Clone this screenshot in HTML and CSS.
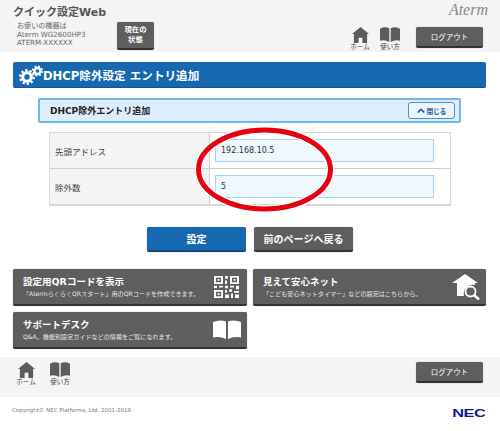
FILE: index.html
```html
<!DOCTYPE html>
<html lang="ja">
<head>
<meta charset="utf-8">
<title>DHCP除外設定 エントリ追加</title>
<link rel="stylesheet" href="styles.css">
</head>
<body>
<svg width="0" height="0" class="defs">
  <defs>
    <symbol id="home" viewBox="0 0 18 18" preserveAspectRatio="none"><path d="M9 0 L18 8 L16 8 L16 18 L11 18 L11 12 L7 12 L7 18 L2 18 L2 8 L0 8 Z"/></symbol>
    <symbol id="book" viewBox="0 0 20 18" preserveAspectRatio="none"><path d="M0 2 Q5 -1 9.3 1.5 L9.3 18 Q5 15 0 16.5 Z M10.7 1.5 Q15 -1 20 2 L20 16.5 Q15 15 10.7 18 Z"/></symbol>
  </defs>
</svg>
<div class="page">
  <header class="head">
    <div class="head-left">
      <div class="app-title">クイック設定Web</div>
      <div class="head-info">
        <div class="device">お使いの機器は<br>Aterm WG2600HP3<br>ATERM-XXXXXX</div>
        <a class="btn btn-status">現在の<br>状態</a>
      </div>
    </div>
    <div class="head-right">
      <div class="aterm">Aterm</div>
      <div class="nav-row">
        <a class="nav-icon"><svg class="ic-home"><use href="#home"/></svg><span>ホーム</span></a>
        <a class="nav-icon"><svg class="ic-book"><use href="#book"/></svg><span>使い方</span></a>
        <a class="btn btn-logout">ログアウト</a>
      </div>
    </div>
  </header>

  <h1 class="page-title">
    <svg class="gears" viewBox="0 0 24 20">
      <g fill="none" stroke="#fff">
        <circle cx="8" cy="12" r="4.3" stroke-width="3.2"/>
        <circle cx="8" cy="12" r="6.8" stroke-width="2.2" stroke-dasharray="2.3 2"/>
        <circle cx="18.5" cy="6" r="3" stroke-width="2.4"/>
        <circle cx="18.5" cy="6" r="4.7" stroke-width="1.8" stroke-dasharray="1.9 1.8"/>
      </g>
    </svg>
    <span>DHCP除外設定 エントリ追加</span>
  </h1>

  <section class="panel-head">
    <span>DHCP除外エントリ追加</span>
    <a class="close"><svg viewBox="0 0 10 6" class="chev"><path d="M1 5.5 L5 1.5 L9 5.5" fill="none" stroke="#15599b" stroke-width="2"/></svg>閉じる</a>
  </section>

  <div class="form-table">
    <div class="row">
      <div class="label">先頭アドレス</div>
      <div class="field"><div class="input">192.168.10.5</div></div>
    </div>
    <div class="row">
      <div class="label">除外数</div>
      <div class="field"><div class="input">5</div></div>
    </div>
  </div>

  <div class="actions">
    <a class="btn btn-blue">設定</a>
    <a class="btn btn-back">前のページへ戻る</a>
  </div>

  <div class="cards">
    <a class="card">
      <div><div class="card-title">設定用QRコードを表示</div><div class="card-sub">「AtermらくらくQRスタート」用のQRコードを作成できます。</div></div>
      <svg class="card-ic qr" viewBox="0 0 25 25" preserveAspectRatio="none">
        <path fill="#fff" d="M0 0h9v9H0z M2 2v5h5V2z M3.5 3.5h2v2h-2z M16 0h9v9h-9z M18 2v5h5V2z M19.5 3.5h2v2h-2z M0 16h9v9H0z M2 18v5h5v-5z M3.5 19.5h2v2h-2z M11 0h3v3h-3z M11 5h2v4h-2z M0 11h3v3H0z M5 11h4v2H5z M11 11h3v3h-3z M16 11h4v2h-4z M22 11h3v4h-3z M11 16h2v3h-2z M15 15h3v3h-3z M20 17h5v2h-5z M11 21h4v4h-4z M17 20h2v5h-2z M21 21h4v4h-4z" fill-rule="evenodd"/>
      </svg>
    </a>
    <a class="card">
      <div><div class="card-title">見えて安心ネット</div><div class="card-sub">「こども安心ネットタイマー」などの設定はこちらから。</div></div>
      <svg class="card-ic netic" viewBox="0 0 28 26">
        <path fill="#fff" d="M13 0 L26 9 L23 9 L23 11 A9 9 0 0 0 12 22 L5 22 L5 9 L0 9 Z"/>
        <circle cx="18.5" cy="17.5" r="5" fill="none" stroke="#fff" stroke-width="1.8"/>
        <path d="M22 21 L27 25.5" stroke="#fff" stroke-width="2.6"/>
      </svg>
    </a>
    <a class="card">
      <div><div class="card-title">サポートデスク</div><div class="card-sub">Q&amp;A、機能別設定ガイドなどの情報をご覧になれます。</div></div>
      <svg class="card-ic bookic"><use href="#book"/></svg>
    </a>
  </div>

  <div class="foot-bar">
    <div class="foot-nav">
      <a class="nav-icon"><svg class="ic-home"><use href="#home"/></svg><span>ホーム</span></a>
      <a class="nav-icon"><svg class="ic-book"><use href="#book"/></svg><span>使い方</span></a>
    </div>
    <a class="btn btn-logout">ログアウト</a>
  </div>

  <footer class="copy">
    <span class="copy-text">Copyright© NEC Platforms, Ltd. 2001-2018</span>
    <span class="nec">NEC</span>
  </footer>

  <svg class="mark" viewBox="0 0 150 96">
    <ellipse cx="71.5" cy="47.5" rx="66" ry="39.5" fill="none" stroke="#fff" stroke-width="7.5"/>
    <ellipse cx="71.5" cy="47.5" rx="66" ry="39.5" fill="none" stroke="#e60012" stroke-width="5"/>
  </svg>
</div>
</body>
</html>
```
FILE: styles.css
```css
* { box-sizing: border-box; }
html, body { margin: 0; padding: 0; background: #fff; }
body { font-family: "DejaVu Sans", "Noto Sans CJK JP", sans-serif; color: #333; overflow: hidden; }
.defs { position: absolute; }
.page { position: relative; width: 500px; height: 431px; overflow: hidden; }

.head { height: 52px; background: #f4f4f4; display: flex; justify-content: space-between; padding: 0 17px 0 13px; }
.app-title { font-size: 11px; font-weight: bold; color: #555; padding-top: 5px; line-height: 16px; }
.head-info { display: flex; align-items: flex-start; padding-left: 4px; margin-top: 1px; }
.device { font-size: 7.1px; line-height: 8.7px; color: #666; width: 100px; }
.btn-status { width: 37px; height: 28px; font-size: 7.4px; line-height: 10px; font-weight: bold; }

.head-right { display: flex; flex-direction: column; align-items: flex-end; }
.aterm { font-family: "Liberation Serif", serif; font-style: italic; font-size: 16px; line-height: 16px; color: #888; padding-top: 2px; margin-right: -5px; height: 27px; }
.nav-row { display: flex; align-items: flex-start; }
.nav-row .nav-icon:nth-child(1) { margin-right: 10px; }
.nav-row .nav-icon:nth-child(2) { margin-right: 16px; }

.nav-icon { display: flex; flex-direction: column; align-items: center; width: 20px; font-size: 6.5px; line-height: 8px; color: #444; }
.nav-icon svg { display: block; fill: #5c5c5c; }
.ic-home { width: 17px; height: 16px; }
.ic-book { width: 20px; height: 15px; margin-bottom: 1px; }
.nav-icon span { white-space: nowrap; }

.btn { display: flex; align-items: center; justify-content: center; text-align: center; color: #fff; background: #5e5e5e; border-radius: 2px; border-bottom: 2px solid #333; box-shadow: 0 0 1px #888; }
.btn-logout { width: 67px; height: 21px; font-size: 7.5px; }

.page-title { margin: 10px 14px 0 13px; height: 26px; background: #1669b0; border-bottom: 1px solid #0f558f; border-radius: 2px; color: #fff; font-size: 11.6px; font-weight: bold; display: flex; align-items: center; padding-left: 6px; gap: 0; }
.gears { width: 24px; height: 20px; flex: none; }

.panel-head { margin: 10px 39px 0 38px; height: 25px; background: #dcedfc; border: 2px solid #6db8f0; border-radius: 2px; display: flex; align-items: center; justify-content: space-between; padding: 0 4px 0 10px; font-size: 9px; font-weight: bold; color: #222; }
.close { width: 47px; height: 17px; border: 1px solid #4d90cc; border-radius: 3px; background: #eef6fd; color: #15599b; font-size: 6.5px; font-weight: bold; display: flex; align-items: center; justify-content: center; gap: 2px; }
.chev { width: 8px; height: 5px; }

.form-table { margin: 9px 49px 0 49px; border: 1px solid #d8d8d8; border-width: 1px 1px 2px 1px; }
.row { display: flex; height: 35px; }
.row + .row { border-top: 1px solid #d0d0d0; height: 36px; }
.label { width: 160px; background: #f4f4f4; border-right: 1px solid #d0d0d0; display: flex; align-items: center; padding-left: 5px; font-size: 8.5px; color: #444; }
.field { flex: 1; display: flex; align-items: center; padding-left: 5px; }
.input { width: 219px; height: 23px; background: #eff7ff; border: 1px solid #a5d6f8; display: flex; align-items: center; padding-left: 5px; font-size: 8px; color: #333; }

.actions { display: flex; justify-content: center; gap: 8px; margin-top: 21px; }
.actions .btn { width: 99px; height: 25px; font-weight: bold; font-size: 10px; }
.btn-blue { background: #1669b0; border-bottom-color: #0d4a80; }

.cards { display: grid; grid-template-columns: 234px 233px; column-gap: 6px; row-gap: 6px; margin: 17px 0 0 13px; }
.card { height: 37px; background: #5e5e5e; border-radius: 2px; border-bottom: 2px solid #333; box-shadow: 0 0 1px #888; color: #fff; display: flex; justify-content: space-between; align-items: center; padding: 0 6px 0 10px; }
.card-title { font-size: 9.5px; font-weight: bold; line-height: 13px; white-space: nowrap; }
.card-sub { font-size: 6.1px; line-height: 9px; color: #e8e8e8; white-space: nowrap; margin-top: 1px; }
.card-ic { flex: none; }
.qr { width: 25px; height: 22px; margin-right: 2px; }
.netic { width: 28px; height: 26px; }
.bookic { width: 28px; height: 19px; fill: #fff; }

.foot-bar { height: 40px; margin-top: 8px; background: #f4f4f4; display: flex; justify-content: space-between; align-items: flex-start; padding: 5px 17px 0 16px; }
.foot-nav { display: flex; gap: 14px; }

.copy { display: flex; justify-content: space-between; align-items: flex-start; padding: 9px 15px 0 12px; font-size: 5.5px; line-height: 8px; color: #777; }
.nec { font-family: "Liberation Sans", sans-serif; font-size: 11px; line-height: 11px; margin-top: 2px; font-weight: bold; color: #15158c; transform: scaleX(1.48); transform-origin: right center; letter-spacing: -0.3px; }

.mark { position: absolute; left: 193px; top: 122px; width: 150px; height: 96px; }
```
